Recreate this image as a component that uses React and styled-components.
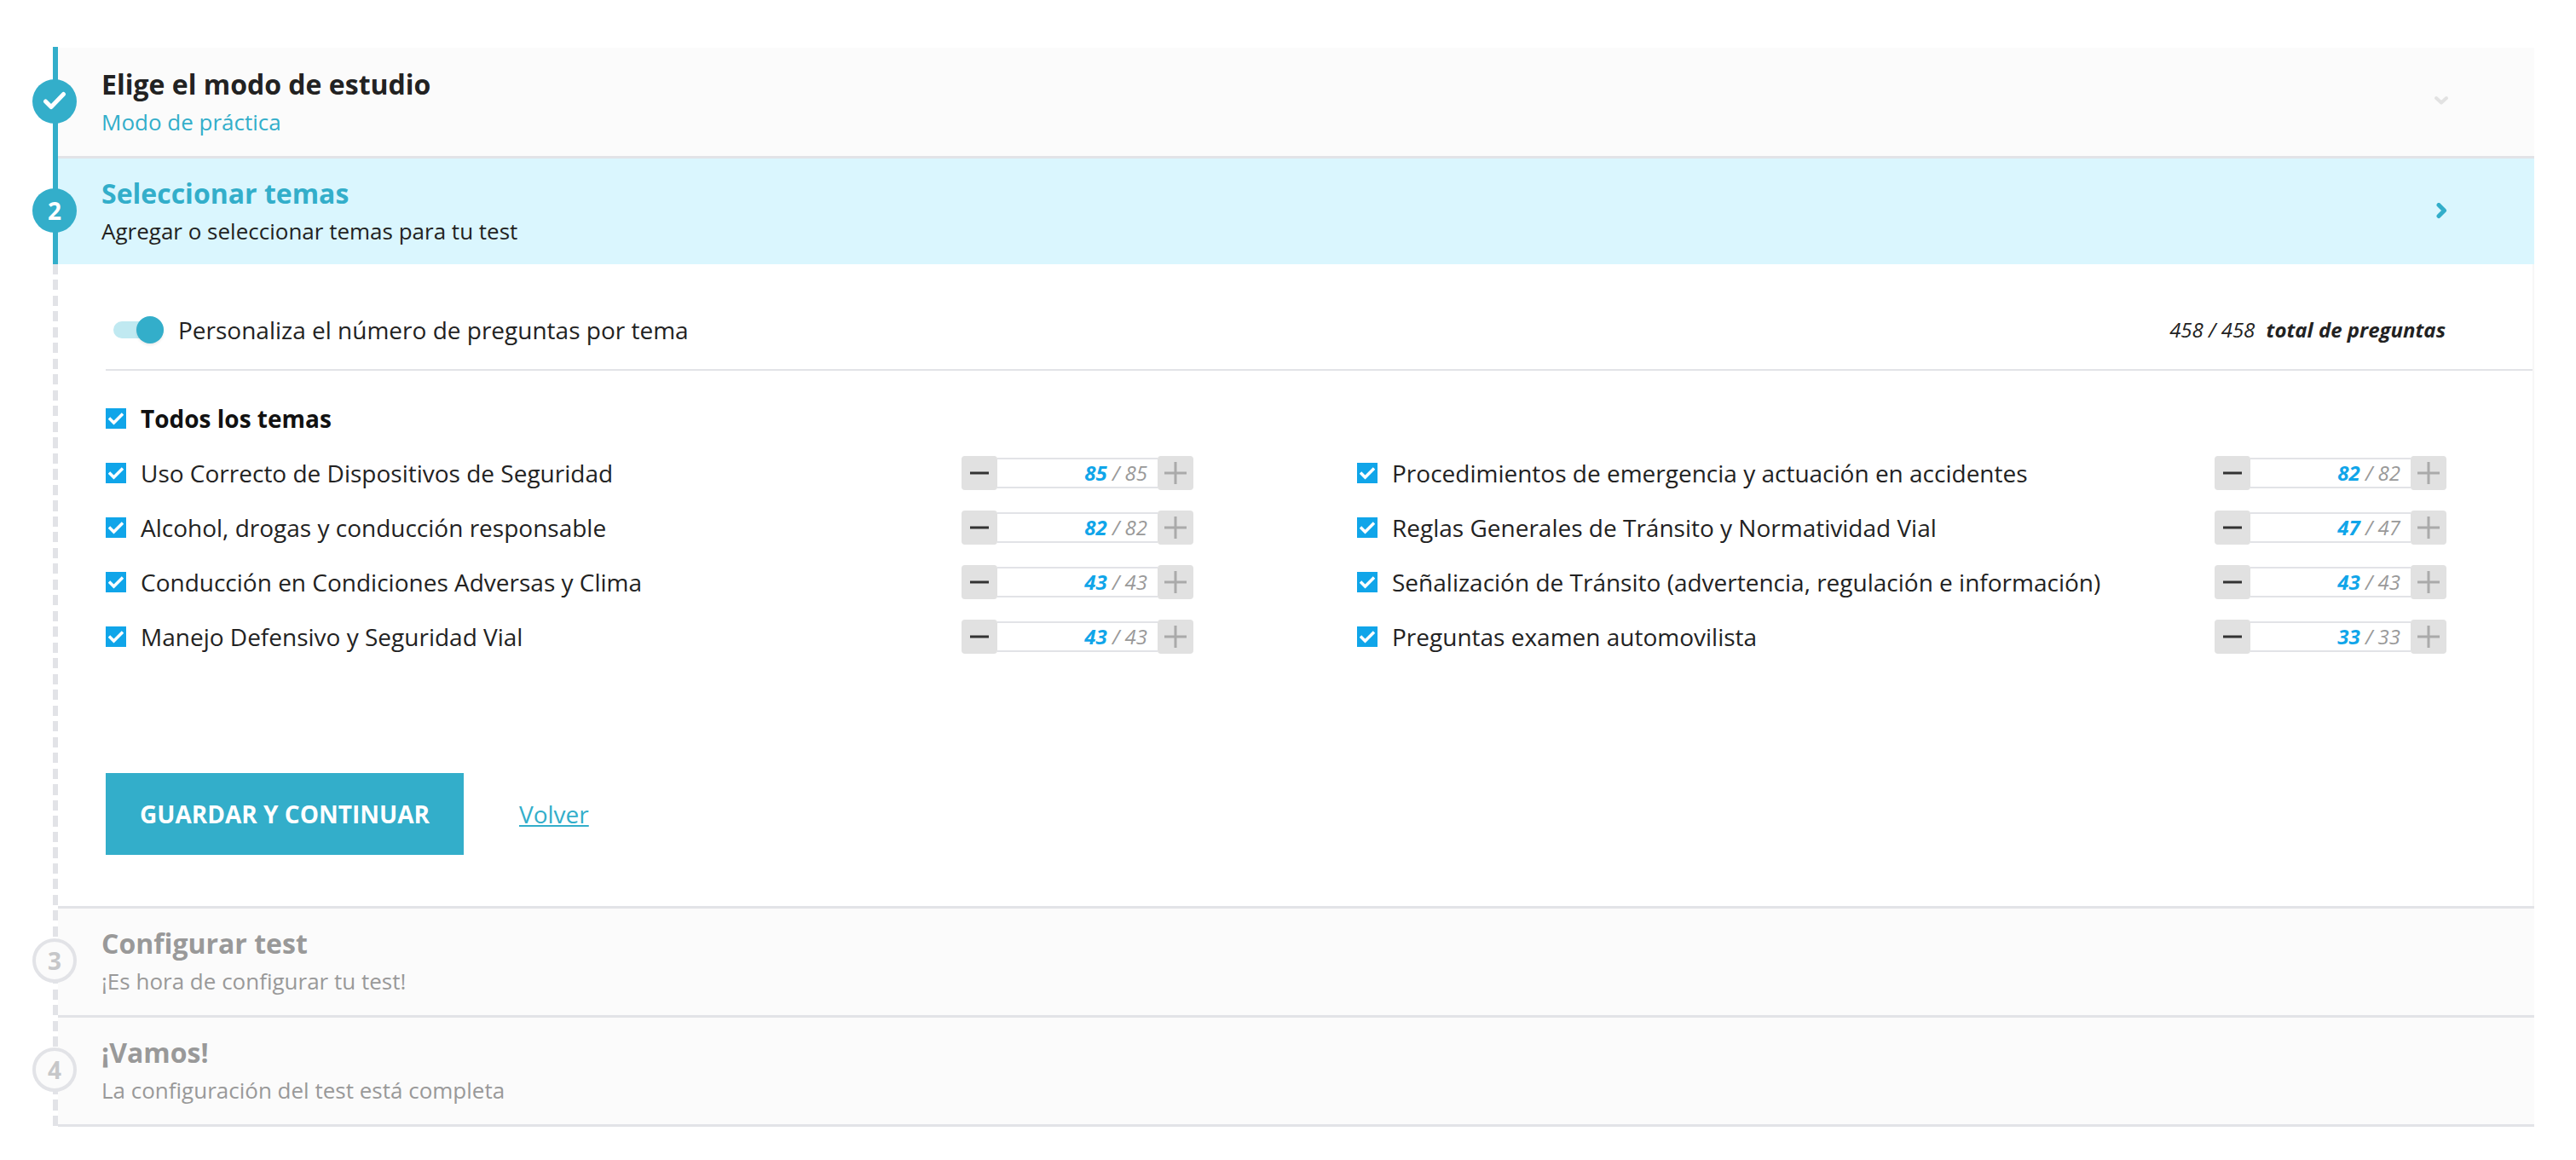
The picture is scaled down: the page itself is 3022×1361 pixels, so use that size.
import React from "react";
import styled, { createGlobalStyle } from "styled-components";

const TEAL = "#33aeca";
const BLUE = "#10a5e9";
const LINE = "#e2e3e7";

const Global = createGlobalStyle`
  body {
    margin: 0;
    background: #fff;
    font-family: "Open Sans", "Liberation Sans", sans-serif;
    color: #222;
  }
`;

const Page = styled.div`
  padding: 55px 49px 39px 62px;
`;

const Step = styled.section`
  position: relative;
  display: flex;
  flex-direction: column;
  border-left: 6px solid ${(p) => (p.$done ? TEAL : "transparent")};
  ${(p) =>
    !p.$done &&
    `background: repeating-linear-gradient(to bottom, ${LINE} 0 12px, transparent 12px 18.5px) left top / 6px 100% no-repeat border-box;`}
`;

const Header = styled.header`
  position: relative;
  display: flex;
  align-items: center;
  justify-content: space-between;
  box-sizing: border-box;
  height: ${(p) => p.$height}px;
  margin-top: ${(p) => p.$top || 0}px;
  padding: 0 99px 0 51px;
  background: ${(p) => (p.$active ? "#daf6fe" : "#fbfbfb")};
  border-top: ${(p) => (p.$ruled ? `3px solid ${LINE}` : "0")};
  border-bottom: ${(p) => (p.$active ? "0" : `3px solid ${LINE}`)};
`;

const Titles = styled.div`
  display: flex;
  flex-direction: column;
  align-self: flex-start;
  gap: 2px;
  padding-top: ${(p) => p.$pad}px;
`;

const Title = styled.h2`
  margin: 0;
  font-size: 32px;
  line-height: 42px;
  font-weight: 700;
  color: ${(p) => p.$color};
`;

const Sub = styled.p`
  margin: 0;
  font-size: 26px;
  line-height: 42px;
  color: ${(p) => p.$color};
`;

const Circle = styled.div`
  position: absolute;
  left: -30px;
  top: ${(p) => p.$top}px;
  width: 52px;
  height: 52px;
  box-sizing: border-box;
  border-radius: 50%;
  display: flex;
  align-items: center;
  justify-content: center;
  font-size: 28px;
  font-weight: 700;
  background: ${(p) => (p.$off ? "#fbfbfb" : TEAL)};
  border: ${(p) => (p.$off ? `4px solid ${LINE}` : "0")};
  color: ${(p) => (p.$off ? "#c6c7c9" : "#fff")};
`;

const Panel = styled.div`
  display: flex;
  flex-direction: column;
  border-right: 2px solid #f7f7f7;
`;

const ToggleRow = styled.div`
  display: flex;
  align-items: center;
  justify-content: space-between;
  height: 123px;
  margin-left: 56px;
  padding: 0 102px 0 9px;
  border-bottom: 2px solid ${LINE};
`;

const ToggleLabel = styled.label`
  display: flex;
  align-items: center;
  gap: 17px;
  font-size: 28px;
  margin-top: 30px;
`;

const Toggle = styled.span`
  position: relative;
  display: block;
  width: 59px;
  height: 20px;
  border-radius: 10px;
  background: #c0e9f1;
  &::after {
    content: "";
    position: absolute;
    right: 0;
    top: -6px;
    width: 32px;
    height: 32px;
    border-radius: 50%;
    background: ${TEAL};
    box-shadow: 0 2px 3px rgba(0, 0, 0, 0.08);
  }
`;

const Total = styled.div`
  margin-top: 30px;
  font-size: 24px;
  font-style: italic;
  b {
    margin-left: 7px;
    font-weight: 700;
  }
`;

const Body = styled.div`
  padding: 24px 102px 0 56px;
`;

const AllRow = styled.div`
  display: flex;
  align-items: center;
  gap: 17px;
  height: 64px;
  font-size: 28px;
  font-weight: 700;
  color: #111;
`;

const Grid = styled.div`
  display: grid;
  grid-template-columns: 1276px 1278px;
  column-gap: 192px;
  grid-auto-rows: 64px;
`;

const TopicRow = styled.div`
  display: flex;
  align-items: center;
  justify-content: space-between;
`;

const TopicName = styled.div`
  display: flex;
  align-items: center;
  gap: 17px;
  font-size: 28px;
`;

const Check = styled.span`
  flex: none;
  display: flex;
  align-items: center;
  justify-content: center;
  width: 24px;
  height: 24px;
  background: ${BLUE};
`;

const Stepper = styled.div`
  display: flex;
  align-items: center;
  width: 272px;
  height: 40px;
`;

const StepButton = styled.span`
  flex: none;
  display: flex;
  align-items: center;
  justify-content: center;
  width: 42px;
  height: 40px;
  border-radius: 4px;
  background: #e1e1e1;
`;

const Count = styled.div`
  flex: 1;
  box-sizing: border-box;
  height: 36px;
  padding-right: 12px;
  text-align: right;
  font-size: 24px;
  line-height: 32px;
  font-style: italic;
  color: #999;
  border-top: 2px solid ${LINE};
  border-bottom: 2px solid ${LINE};
  b {
    font-weight: 700;
    color: ${BLUE};
  }
`;

const Actions = styled.div`
  display: flex;
  align-items: center;
  gap: 65px;
  margin: 128px 0 60px;
`;

const SaveButton = styled.button`
  width: 420px;
  height: 96px;
  padding: 0;
  border: 0;
  background: ${TEAL};
  color: #fff;
  font-family: inherit;
  font-size: 28px;
  font-weight: 700;
`;

const BackLink = styled.a`
  font-size: 28px;
  color: ${TEAL};
  text-decoration: underline;
`;

const BoxCheck = () => (
  <svg width="18" height="18" viewBox="0 0 18 18" fill="none">
    <path d="M1 8.5 6.5 14 17 3.5" stroke="#fff" strokeWidth="3.5" />
  </svg>
);

const RoundCheck = () => (
  <svg width="28" height="28" viewBox="0 0 28 28" fill="none">
    <path d="M3.5 14 10 20.5 24.5 5.5" stroke="#fff" strokeWidth="5" strokeLinecap="round" strokeLinejoin="round" />
  </svg>
);

const Minus = () => (
  <svg width="22" height="4" viewBox="0 0 22 4">
    <rect width="22" height="3" y="0.5" fill="#333" />
  </svg>
);

const Plus = () => (
  <svg width="26" height="26" viewBox="0 0 26 26">
    <path d="M0 13h26M13 0v26" stroke="#aaa" strokeWidth="3" />
  </svg>
);

const Chevron = ({ d, color, weight }) => (
  <svg width="20" height="20" viewBox="0 0 20 20" fill="none">
    <path d={d} stroke={color} strokeWidth={weight} strokeLinecap="round" strokeLinejoin="round" />
  </svg>
);

const topics = [
  ["Uso Correcto de Dispositivos de Seguridad", 85],
  ["Procedimientos de emergencia y actuación en accidentes", 82],
  ["Alcohol, drogas y conducción responsable", 82],
  ["Reglas Generales de Tránsito y Normatividad Vial", 47],
  ["Conducción en Condiciones Adversas y Clima", 43],
  ["Señalización de Tránsito (advertencia, regulación e información)", 43],
  ["Manejo Defensivo y Seguridad Vial", 43],
  ["Preguntas examen automovilista", 33],
];

export default function App() {
  return (
    <Page>
      <Global />
      <Step $done>
        <Header $height={130} $top={1}>
          <Titles $pad={22}>
            <Title $color="#222">Elige el modo de estudio</Title>
            <Sub $color={TEAL}>Modo de práctica</Sub>
          </Titles>
          <Chevron d="M4 5l6 5.5 6-5.5" color="#e2e2e2" weight={4} />
          <Circle $top={37}>
            <RoundCheck />
          </Circle>
        </Header>
        <Header $active $height={124}>
          <Titles $pad={20}>
            <Title $color={TEAL}>Seleccionar temas</Title>
            <Sub $color="#222">Agregar o seleccionar temas para tu test</Sub>
          </Titles>
          <Chevron d="M7 2.5l6.5 6.5-6.5 6.5" color={TEAL} weight={5} />
          <Circle $top={35}>2</Circle>
        </Header>
      </Step>

      <Step>
        <Panel>
          <ToggleRow>
            <ToggleLabel>
              <Toggle />
              Personaliza el número de preguntas por tema
            </ToggleLabel>
            <Total>
              458 / 458 <b>total de preguntas</b>
            </Total>
          </ToggleRow>
          <Body>
            <AllRow>
              <Check>
                <BoxCheck />
              </Check>
              Todos los temas
            </AllRow>
            <Grid>
              {topics.map(([name, count]) => (
                <TopicRow key={name}>
                  <TopicName>
                    <Check>
                      <BoxCheck />
                    </Check>
                    {name}
                  </TopicName>
                  <Stepper>
                    <StepButton>
                      <Minus />
                    </StepButton>
                    <Count>
                      <b>{count}</b> / {count}
                    </Count>
                    <StepButton>
                      <Plus />
                    </StepButton>
                  </Stepper>
                </TopicRow>
              ))}
            </Grid>
            <Actions>
              <SaveButton>GUARDAR Y CONTINUAR</SaveButton>
              <BackLink href="#">Volver</BackLink>
            </Actions>
          </Body>
        </Panel>
        <Header $ruled $height={131}>
          <Titles $pad={20}>
            <Title $color="#999">Configurar test</Title>
            <Sub $color="#999">¡Es hora de configurar tu test!</Sub>
          </Titles>
          <Circle $off $top={35}>
            3
          </Circle>
        </Header>
        <Header $height={128}>
          <Titles $pad={20}>
            <Title $color="#999">¡Vamos!</Title>
            <Sub $color="#999">La configuración del test está completa</Sub>
          </Titles>
          <Circle $off $top={35}>
            4
          </Circle>
        </Header>
      </Step>
    </Page>
  );
}
